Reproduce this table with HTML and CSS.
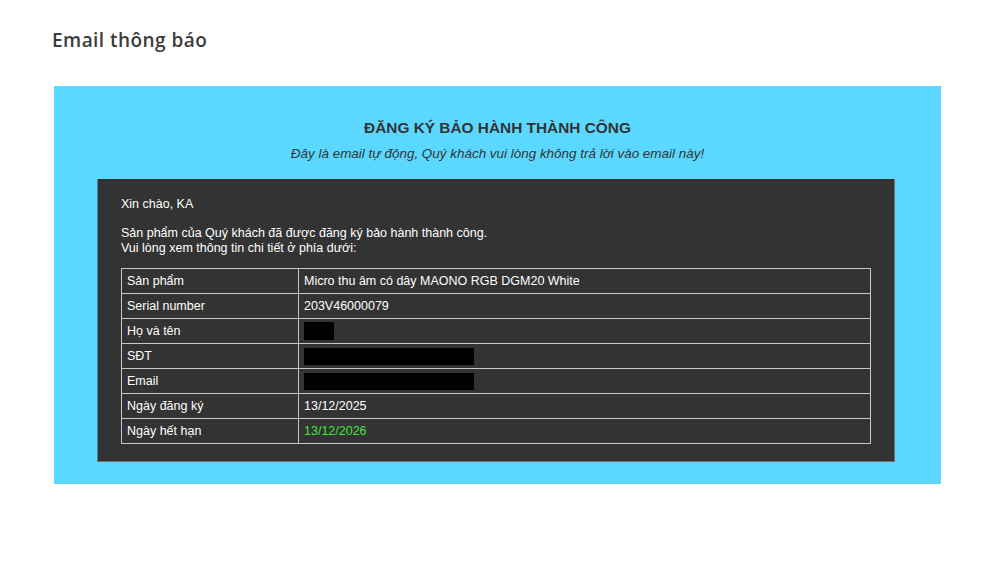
FILE: index.html
```html
<!DOCTYPE html>
<html lang="vi">
<head>
<meta charset="utf-8">
<title>Email thông báo</title>
<link rel="stylesheet" href="styles.css">
</head>
<body>
<div class="page">
  <h1 class="page-title">Email thông báo</h1>
  <div class="mail">
    <h2 class="mail-title">ĐĂNG KÝ BẢO HÀNH THÀNH CÔNG</h2>
    <p class="mail-sub">Đây là email tự động, Quý khách vui lòng không trả lời vào email này!</p>
    <div class="card">
      <p class="greet">Xin chào, KA</p>
      <p class="intro">Sản phẩm của Quý khách đã được đăng ký bảo hành thành công.<br>Vui lòng xem thông tin chi tiết ở phía dưới:</p>
      <table class="info">
        <tr><td class="k">Sản phẩm</td><td>Micro thu âm có dây MAONO RGB DGM20 White</td></tr>
        <tr><td class="k">Serial number</td><td>203V46000079</td></tr>
        <tr><td class="k">Họ và tên</td><td><span class="redact r-name"></span></td></tr>
        <tr><td class="k">SĐT</td><td><span class="redact r-long"></span></td></tr>
        <tr><td class="k">Email</td><td><span class="redact r-long"></span></td></tr>
        <tr><td class="k">Ngày đăng ký</td><td>13/12/2025</td></tr>
        <tr><td class="k">Ngày hết hạn</td><td class="green">13/12/2026</td></tr>
      </table>
    </div>
  </div>
</div>
</body>
</html>
```
FILE: styles.css
```css
* { box-sizing: border-box; }
html, body { margin: 0; padding: 0; background: #fff; }
.page { padding: 28px 0 0 52px; }
.page-title {
  margin: 0;
  font-family: "Open Sans", sans-serif;
  font-weight: 600;
  font-size: 19px;
  letter-spacing: 0.45px;
  line-height: 24px;
  color: #3b3b3b;
}
.mail {
  margin: 34px 0 0 2px;
  width: 887px;
  height: 398px;
  background: #5bd8ff;
  padding-top: 33px;
  font-family: "Liberation Sans", Arial, sans-serif;
  color: #333;
}
.mail-title {
  margin: 0;
  text-align: center;
  font-size: 15.4px;
  font-weight: bold;
  line-height: 18px;
}
.mail-sub {
  margin: 9px 0 0;
  text-align: center;
  font-style: italic;
  font-size: 13.45px;
  line-height: 16px;
}
.card {
  margin: 17px 0 0 43px;
  width: 798px;
  background: #333;
  border-left: 1px solid #3f8ea6;
  border-right: 1px solid #707070;
  border-bottom: 1px solid #707070;
  padding: 18px 23px 17px;
  color: #fff;
  font-size: 12.5px;
  line-height: 14.5px;
}
.greet { margin: 0 0 14.5px; }
.intro { margin: 0 0 13px; }
.info {
  width: 750px;
  border-collapse: collapse;
  border: 1px solid #c8c8c8;
}
.info td {
  border: 1px solid #c8c8c8;
  height: 25px;
  padding: 0 5px;
  vertical-align: middle;
  font-size: 12.5px;
  line-height: 15px;
}
.info td.k { width: 177px; }
.green { color: #3ee83e; }
.redact { display: inline-block; vertical-align: middle; background: #000; }
.r-name { width: 30px; height: 18px; }
.r-long { width: 170px; height: 17px; }
```
